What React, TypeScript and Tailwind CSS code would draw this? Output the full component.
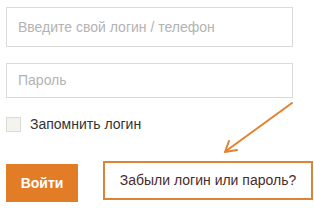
import React from "react";

export default function App() {
  return (
    <div className="relative w-[314px] h-[208px] bg-white overflow-hidden" style={{ fontFamily: '"Liberation Sans", Arial, sans-serif' }}>
      <div className="flex flex-col pl-[6px] pt-[7px]">
        <div className="w-[287px] h-[40px] border border-[#dadada] flex items-center pl-[11px] text-[14px] text-[#b3b3b3]">
          Введите свой логин / телефон
        </div>
        <div className="w-[287px] h-[35px] mt-[16px] border border-[#dadada] flex items-center pl-[11px] text-[14px] text-[#b3b3b3]">
          Пароль
        </div>
        <div className="flex items-center mt-[19px] h-[14px]">
          <div className="w-[15px] h-[15px] border border-[#dcdcd6] bg-[#f4f4ee]" />
          <span className="ml-[9px] text-[14px] text-[#333333]">Запомнить логин</span>
        </div>
        <div className="flex items-start mt-[30px]">
          <div className="w-[72px] h-[38px] mt-[3px] bg-[#e27c27] flex items-center justify-center text-white font-bold text-[14px]">
            Войти
          </div>
          <div className="ml-[25px] w-[210px] h-[39px] border-2 border-[#dc8535] flex items-center justify-center text-[14px] text-[#4a2b2b]">
            Забыли логин или пароль?
          </div>
        </div>
      </div>
      <svg className="absolute left-0 top-0 pointer-events-none" width="314" height="208" viewBox="0 0 314 208">
        <g stroke="#e5812e" strokeWidth="2" fill="none" strokeLinecap="round" strokeLinejoin="round">
          <line x1="292" y1="103" x2="226" y2="151" />
          <polyline points="229,141 225,152 237,150" />
        </g>
      </svg>
    </div>
  );
}
